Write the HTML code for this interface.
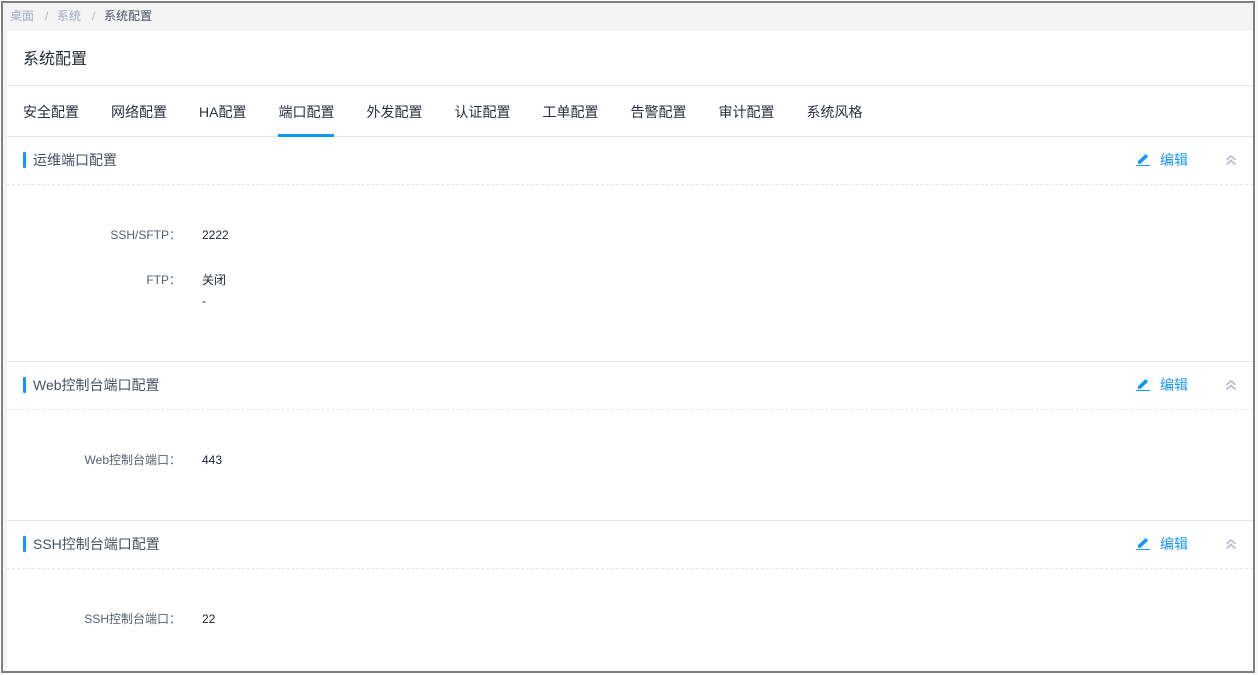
<!DOCTYPE html>
<html lang="zh">
<head>
<meta charset="utf-8">
<style>
html,body{margin:0;padding:0;background:#fff;}
body{width:1258px;height:675px;position:relative;overflow:hidden;font-family:"Liberation Sans","Noto Sans CJK SC",sans-serif;}
div,span{position:absolute;white-space:nowrap;}
.hl{height:1px;background:#e3e5ea;left:7px;width:1246px;}
.dl{height:0;border-top:1px dashed #e3e7ec;left:7px;width:1246px;}
.tab{top:103px;font-size:14px;line-height:18px;color:#2a313b;}
.bar{left:23px;width:3px;height:16px;background:#0f97f5;border-radius:1px;}
.st{left:33px;font-size:14px;line-height:18px;color:#47515e;}
.ed{left:1160px;font-size:14px;line-height:18px;color:#1996f5;}
.lb{right:1077px;font-size:12px;line-height:16px;color:#566170;}
.v{left:202px;font-size:12px;line-height:16px;color:#232a35;}
svg{position:absolute;}
</style>
</head>
<body>
<div style="left:3px;top:3px;width:1250px;height:28px;background:#f4f4f4"></div>
<div style="left:3px;top:31px;width:4px;height:640px;background:#f4f4f4"></div>
<div style="left:1256px;top:0;width:2px;height:675px;background:#f6f6f6"></div>
<div style="left:1px;top:1px;width:1250px;height:668px;border:2px solid #808080"></div>

<div style="left:10px;top:8px;font-size:12px;line-height:16px;color:#a3adbf">桌面</div>
<div style="left:45px;top:8px;font-size:12px;line-height:16px;color:#b3b9c6">/</div>
<div style="left:57px;top:8px;font-size:12px;line-height:16px;color:#a3adbf">系统</div>
<div style="left:92px;top:8px;font-size:12px;line-height:16px;color:#b3b9c6">/</div>
<div style="left:104px;top:8px;font-size:12px;line-height:16px;color:#47515e">系统配置</div>

<div style="left:23px;top:49px;font-size:16px;line-height:20px;color:#232a35;padding-top:1px">系统配置</div>
<div class="hl" style="top:85px"></div>

<div class="tab" style="left:23px">安全配置</div>
<div class="tab" style="left:111px">网络配置</div>
<div class="tab" style="left:199px">HA配置</div>
<div class="tab" style="left:278.5px">端口配置</div>
<div class="tab" style="left:366.5px">外发配置</div>
<div class="tab" style="left:454.5px">认证配置</div>
<div class="tab" style="left:542.5px">工单配置</div>
<div class="tab" style="left:630.5px">告警配置</div>
<div class="tab" style="left:718.5px">审计配置</div>
<div class="tab" style="left:806.5px">系统风格</div>
<div class="hl" style="top:136px"></div>
<div style="left:278px;top:134px;width:56px;height:3px;background:#0f97f5"></div>

<div class="bar" style="top:152px"></div>
<div class="st" style="top:151px">运维端口配置</div>
<svg style="left:1136px;top:153px" width="14" height="14" viewBox="0 0 14 14"><path d="M2 10.8V8.2L9.6 1 12.2 3.5 4.6 10.8Z" fill="#0f97f5"/><rect x="0" y="12" width="14" height="1" fill="#0f97f5"/></svg>
<div class="ed" style="top:151px">编辑</div>
<svg style="left:1225px;top:154px" width="12" height="12" viewBox="0 0 12 12" fill="none" stroke="#a9b4c6" stroke-width="1.5"><path d="M1.5 6 6 2 10.5 6M1.5 10.5 6 6.5 10.5 10.5"/></svg>
<div class="dl" style="top:184px"></div>

<div class="lb" style="top:227px">SSH/SFTP：</div>
<div class="v" style="top:227px">2222</div>
<div class="lb" style="top:272px">FTP：</div>
<div class="v" style="top:272px">关闭</div>
<div class="v" style="top:293px">-</div>

<div class="hl" style="top:361px"></div>
<div class="bar" style="top:377px"></div>
<div class="st" style="top:376px">Web控制台端口配置</div>
<svg style="left:1136px;top:378px" width="14" height="14" viewBox="0 0 14 14"><path d="M2 10.8V8.2L9.6 1 12.2 3.5 4.6 10.8Z" fill="#0f97f5"/><rect x="0" y="12" width="14" height="1" fill="#0f97f5"/></svg>
<div class="ed" style="top:376px">编辑</div>
<svg style="left:1225px;top:379px" width="12" height="12" viewBox="0 0 12 12" fill="none" stroke="#a9b4c6" stroke-width="1.5"><path d="M1.5 6 6 2 10.5 6M1.5 10.5 6 6.5 10.5 10.5"/></svg>
<div class="dl" style="top:409px"></div>

<div class="lb" style="top:452px">Web控制台端口：</div>
<div class="v" style="top:452px">443</div>

<div class="hl" style="top:520px"></div>
<div class="bar" style="top:536px"></div>
<div class="st" style="top:535px">SSH控制台端口配置</div>
<svg style="left:1136px;top:537px" width="14" height="14" viewBox="0 0 14 14"><path d="M2 10.8V8.2L9.6 1 12.2 3.5 4.6 10.8Z" fill="#0f97f5"/><rect x="0" y="12" width="14" height="1" fill="#0f97f5"/></svg>
<div class="ed" style="top:535px">编辑</div>
<svg style="left:1225px;top:538px" width="12" height="12" viewBox="0 0 12 12" fill="none" stroke="#a9b4c6" stroke-width="1.5"><path d="M1.5 6 6 2 10.5 6M1.5 10.5 6 6.5 10.5 10.5"/></svg>
<div class="dl" style="top:568px"></div>

<div class="lb" style="top:611px">SSH控制台端口：</div>
<div class="v" style="top:611px">22</div>
</body>
</html>
